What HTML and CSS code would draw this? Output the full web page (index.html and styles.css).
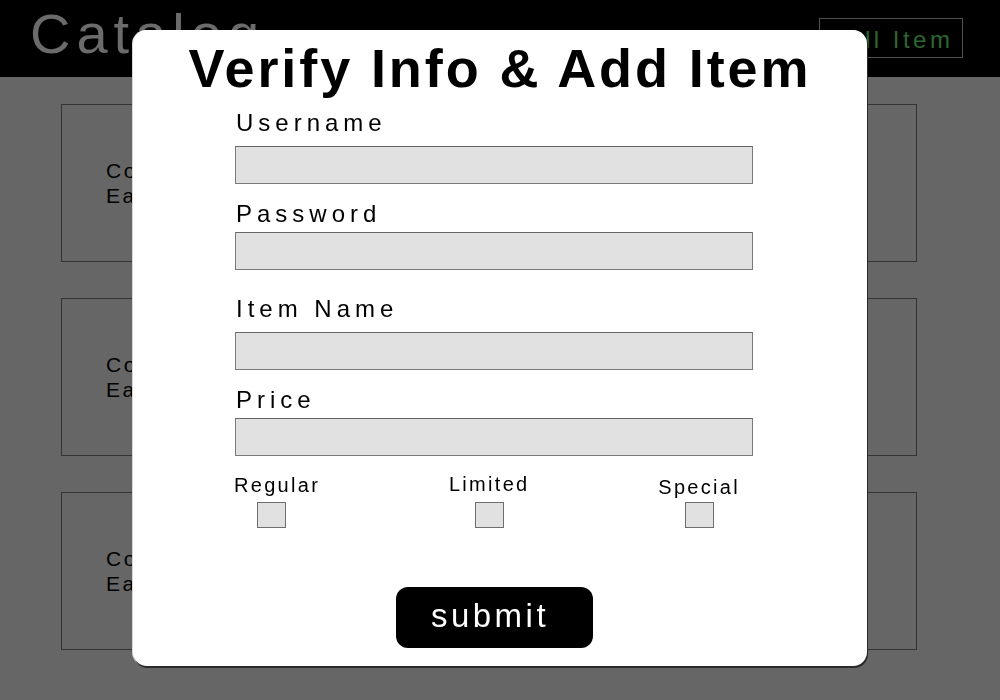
FILE: index.html
```html
<!DOCTYPE html>
<html lang="en">
<head>
<meta charset="utf-8">
<title>Catalog</title>
<link rel="stylesheet" href="styles.css">
</head>
<body>
<header class="topbar">
  <h1 class="brand">Catalog</h1>
  <button class="sell-btn" type="button">Sell Item</button>
</header>

<main class="catalog">
  <div class="card"><p class="card-text">Comic Book<br>Each $12.99</p></div>
  <div class="card"><p class="card-text">Coffee Mug<br>Each $8.50</p></div>
  <div class="card"><p class="card-text">Cotton Shirt<br>Each $15.00</p></div>
  <div class="card"><p class="card-text">Cookbook<br>Each $22.00</p></div>
  <div class="card"><p class="card-text">Coin Set<br>Each $30.00</p></div>
  <div class="card"><p class="card-text">Candle<br>Each $6.25</p></div>
</main>

<div class="modal" role="dialog" aria-labelledby="modal-title">
  <h2 class="modal-title" id="modal-title">Verify Info &amp; Add Item</h2>
  <form class="form">
    <div class="field field--lead">
      <label class="field-label" for="username">Username</label>
      <input class="field-input" id="username" type="text">
    </div>
    <div class="field">
      <label class="field-label" for="password">Password</label>
      <input class="field-input" id="password" type="password">
    </div>
    <div class="field field--lead field--section">
      <label class="field-label" for="itemname">Item Name</label>
      <input class="field-input" id="itemname" type="text">
    </div>
    <div class="field">
      <label class="field-label" for="price">Price</label>
      <input class="field-input" id="price" type="text">
    </div>
    <div class="choices">
      <label class="choice choice--first">
        <span class="choice-label">Regular</span>
        <input class="choice-box" type="checkbox">
      </label>
      <label class="choice choice--up">
        <span class="choice-label">Limited</span>
        <input class="choice-box" type="checkbox">
      </label>
      <label class="choice choice--down">
        <span class="choice-label">Special</span>
        <input class="choice-box" type="checkbox">
      </label>
    </div>
    <button class="submit-btn" type="button">submit</button>
  </form>
</div>
</body>
</html>
```

FILE: styles.css
```css
* {
  box-sizing: border-box;
}

html,
body {
  margin: 0;
  padding: 0;
}

body {
  background: #666666;
  font-family: "Liberation Sans", Arial, Helvetica, sans-serif;
  color: #000;
  width: 1000px;
  height: 700px;
  overflow: hidden;
}

/* ---------- header ---------- */
.topbar {
  height: 77px;
  background: #000;
  display: flex;
  justify-content: space-between;
  align-items: flex-start;
  padding: 2px 37px 0 30px;
}

.brand {
  margin: 0;
  font-weight: normal;
  font-size: 56px;
  line-height: 64px;
  letter-spacing: 6px;
  color: #6b6b6b;
}

.sell-btn {
  margin-top: 16px;
  width: 144px;
  height: 40px;
  background: transparent;
  border: 1px solid #505050;
  color: #2c6631;
  font-family: inherit;
  font-size: 24px;
  letter-spacing: 3.5px;
  padding: 3px 0 0 0;
  line-height: 35px;
}

/* ---------- catalog cards ---------- */
.catalog {
  display: grid;
  grid-template-columns: 1fr 1fr;
  column-gap: 100px;
  row-gap: 36px;
  padding: 27px 83px 0 61px;
}

.card {
  height: 158px;
  border: 1px solid #333;
  display: flex;
  align-items: center;
  padding-left: 44px;
}

.card-text {
  margin: 0;
  font-size: 21px;
  line-height: 25px;
  letter-spacing: 2.5px;
  color: #000;
}

/* ---------- modal ---------- */
.modal {
  position: fixed;
  left: 133px;
  top: 30px;
  width: 734px;
  height: 636px;
  background: #fff;
  border-radius: 14px;
  box-shadow: 1px 2px 0 #2a2a2a, -1px 0 0 #d8d8d8;
  padding-top: 8px;
}

.modal-title {
  margin: 0;
  text-align: center;
  font-size: 54px;
  line-height: 60px;
  font-weight: bold;
  letter-spacing: 2.9px;
  padding-left: 0;
}

.form {
  margin: 11px 114px 0 102px;
}

.field + .field {
  margin-top: 16px;
}

.field.field--section {
  margin-top: 25px;
}

.field-label {
  display: block;
  font-size: 24px;
  line-height: 28px;
  letter-spacing: 5px;
  margin: 0 0 4px 1px;
}

.field--lead .field-label {
  margin-bottom: 9px;
}

.field-input {
  display: block;
  width: 100%;
  height: 38px;
  margin: 0;
  background: #e1e1e1;
  border: 1px solid #7a7a7a;
  border-top-color: #666;
  border-radius: 0;
  -webkit-appearance: none;
  appearance: none;
  font-family: inherit;
  font-size: 18px;
  padding: 0 8px;
}

.choices {
  display: flex;
  justify-content: space-between;
  align-items: flex-start;
  margin-top: 17px;
  padding-right: 13px;
  margin-left: -1px;
}

.choice {
  display: flex;
  flex-direction: column;
  align-items: center;
}

.choice--first .choice-box {
  margin-right: 11px;
}

.choice--up .choice-label {
  margin-top: -1px;
  margin-bottom: 1px;
}

.choice--down .choice-label {
  margin-top: 2px;
  margin-bottom: -2px;
}

.choice-label {
  font-size: 20px;
  line-height: 24px;
  letter-spacing: 2.3px;
}

.choice-box {
  -webkit-appearance: none;
  appearance: none;
  width: 29px;
  height: 26px;
  margin: 5px 0 0;
  background: #e1e1e1;
  border: 1px solid #6e6e6e;
  border-radius: 0;
}

.submit-btn {
  display: block;
  margin: 59px auto 0;
  width: 197px;
  height: 61px;
  border: none;
  border-radius: 12px;
  background: #000;
  color: #fff;
  font-family: inherit;
  font-size: 33px;
  letter-spacing: 3.5px;
  padding: 0 8px 4px 0;
}
```
